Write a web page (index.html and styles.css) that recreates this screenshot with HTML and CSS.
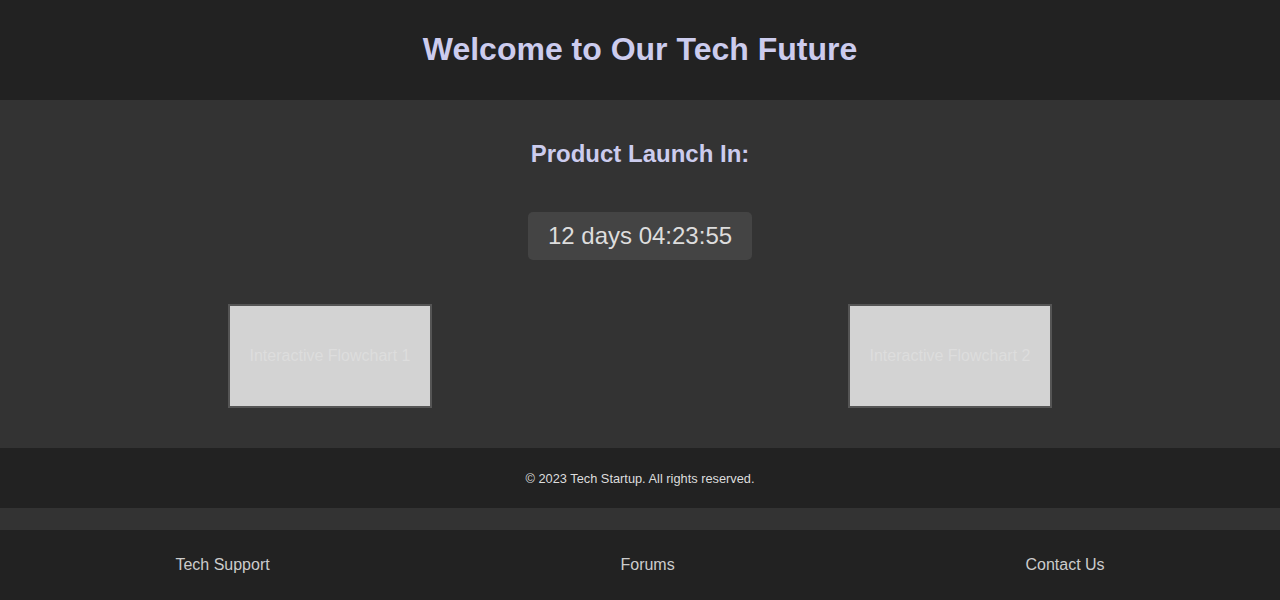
FILE: index.html
```html
<!DOCTYPE html>
<html lang="en">
<head>
<meta charset="utf-8">
<title>Tech Future</title>
<link rel="stylesheet" href="styles.css">
</head>
<body>
<header class="site-header">
  <h1 class="title">Welcome to Our Tech Future</h1>
</header>
<main class="main">
  <h2 class="launch-title">Product Launch In:</h2>
  <div class="countdown-wrap">
    <div class="countdown">12 days 04:23:55</div>
  </div>
  <div class="flowcharts">
    <div class="flowchart">Interactive Flowchart 1</div>
    <div class="flowchart">Interactive Flowchart 2</div>
  </div>
</main>
<footer class="site-footer">
  <p class="copy">© 2023 Tech Startup. All rights reserved.</p>
</footer>
<nav class="bottom-nav">
  <a class="nav-link" href="#">Tech Support</a>
  <a class="nav-link" href="#">Forums</a>
  <a class="nav-link" href="#">Contact Us</a>
</nav>
</body>
</html>
```
FILE: styles.css
```css
html, body {
  margin: 0;
  padding: 0;
}
body {
  background: #333333;
  font-family: "Liberation Sans", Arial, sans-serif;
  color: #dddddd;
}
.site-header {
  background: #222222;
  height: 100px;
  display: flex;
  align-items: center;
  justify-content: center;
}
.title {
  margin: 0;
  font-size: 32px;
  font-weight: bold;
  color: #ccccee;
  line-height: 37px;
  position: relative;
  top: -1px;
}
.main {
  padding: 20px;
  margin-bottom: 20px;
}
.launch-title {
  margin: 20px 0 0;
  font-size: 24px;
  line-height: 28px;
  text-align: center;
  color: #ccccee;
}
.countdown-wrap {
  display: flex;
  justify-content: center;
  margin-top: 44px;
}
.countdown {
  background: #444444;
  border-radius: 5px;
  padding: 10px 20px;
  font-size: 24px;
  line-height: 28px;
  color: #dddddd;
}
.flowcharts {
  display: flex;
  justify-content: space-around;
  margin-top: 44px;
}
.flowchart {
  width: 200px;
  height: 100px;
  border: 2px solid #555555;
  background: #d3d3d3;
  color: #dddddd;
  font-size: 16px;
  display: flex;
  align-items: center;
  justify-content: center;
}
.site-footer {
  background: #222222;
  height: 60px;
  display: flex;
  align-items: center;
  justify-content: center;
}
.copy {
  margin: 0;
  font-size: 12.8px;
  color: #dddddd;
}
.bottom-nav {
  margin-top: 22px;
  background: #222222;
  display: flex;
  justify-content: space-around;
  padding: 26px 0 26px;
}
.nav-link {
  color: #cccccc;
  text-decoration: none;
  font-size: 16px;
  line-height: 18px;
}
```
